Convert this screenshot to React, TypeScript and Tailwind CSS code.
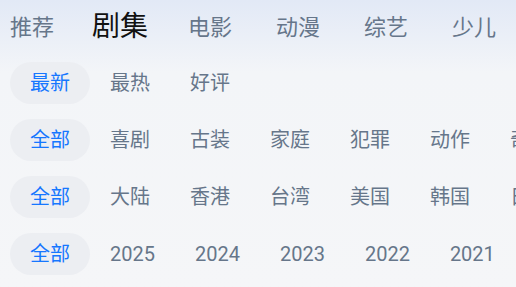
import { useState } from "react";

const tabs = ["推荐", "剧集", "电影", "动漫", "综艺", "少儿"];

const filters = [
  ["最新", "最热", "好评"],
  ["全部", "喜剧", "古装", "家庭", "犯罪", "动作", "奇幻"],
  ["全部", "大陆", "香港", "台湾", "美国", "韩国", "日本"],
  ["全部", "2025", "2024", "2023", "2022", "2021", "2020"],
];

function FilterRow({ items }: { items: string[] }) {
  const [active, setActive] = useState(0);
  return (
    <div className="flex pl-[10px] whitespace-nowrap">
      {items.map((item, i) => (
        <button
          key={item + i}
          onClick={() => setActive(i)}
          className={
            i === active
              ? "h-[42px] px-5 shrink-0 rounded-full bg-[#eceef2] text-[#1677ff] text-[20px]"
              : "h-[42px] px-5 shrink-0 rounded-full text-[#66768a] text-[20px]"
          }
        >
          {item}
        </button>
      ))}
    </div>
  );
}

export default function App() {
  const [tab, setTab] = useState(1);
  return (
    <div
      className="w-[516px] h-[287px] overflow-hidden bg-gradient-to-b from-[#e2e9f6] via-[#f3f5f8] via-[25%] to-[#f5f6f8]"
      style={{ fontFamily: "Roboto, 'Noto Sans CJK SC', sans-serif" }}
    >
      <div className="flex items-center h-[54px] pl-[10px] gap-[44px] whitespace-nowrap">
        {tabs.map((t, i) => (
          <button
            key={t}
            onClick={() => setTab(i)}
            className={
              i === tab
                ? "shrink-0 text-[28px] text-[#111111] -ml-[6px] -mr-[4px]"
                : "shrink-0 text-[22px] text-[#66768a]"
            }
          >
            {t}
          </button>
        ))}
      </div>
      <div className="flex flex-col gap-[15px] pt-2">
        {filters.map((row, i) => (
          <FilterRow key={i} items={row} />
        ))}
      </div>
    </div>
  );
}
